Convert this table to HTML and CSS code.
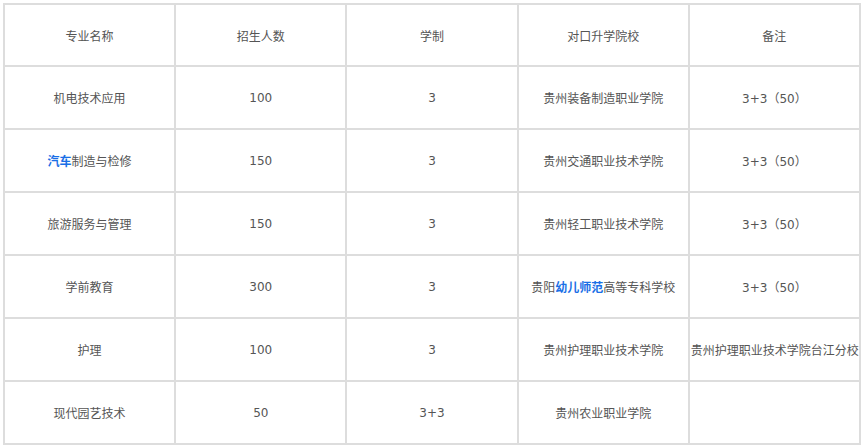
FILE: index.html
```html
<!DOCTYPE html>
<html lang="zh-CN">
<head>
<meta charset="utf-8">
<title>对口升学</title>
<link rel="stylesheet" href="styles.css">
</head>
<body>
<div class="wrap">
<table class="grid">
  <tbody>
    <tr class="head"><td>专业名称</td><td>招生人数</td><td>学制</td><td>对口升学院校</td><td>备注</td></tr>
    <tr><td>机电技术应用</td><td>100</td><td>3</td><td>贵州装备制造职业学院</td><td>3+3（50）</td></tr>
    <tr><td><span class="hl">汽车</span>制造与检修</td><td>150</td><td>3</td><td>贵州交通职业技术学院</td><td>3+3（50）</td></tr>
    <tr><td>旅游服务与管理</td><td>150</td><td>3</td><td>贵州轻工职业技术学院</td><td>3+3（50）</td></tr>
    <tr><td>学前教育</td><td>300</td><td>3</td><td>贵阳<span class="hl">幼儿师范</span>高等专科学校</td><td>3+3（50）</td></tr>
    <tr><td>护理</td><td>100</td><td>3</td><td>贵州护理职业技术学院</td><td>贵州护理职业技术学院台江分校</td></tr>
    <tr><td>现代园艺技术</td><td>50</td><td>3+3</td><td>贵州农业职业学院</td><td></td></tr>
  </tbody>
</table>
</div>
</body>
</html>
```

FILE: styles.css
```css
html, body {
  margin: 0;
  padding: 0;
  background: #ffffff;
}
.wrap {
  padding: 3px 0 0 3px;
}
.grid {
  width: 858px;
  table-layout: fixed;
  border-collapse: separate;
  border-spacing: 0;
  border-top: 2px solid #dddddd;
  border-left: 2px solid #dddddd;
  font-family: "DejaVu Sans", "Noto Sans CJK SC", sans-serif;
  font-size: 12px;
  color: #555555;
}
.grid td {
  border-right: 2px solid #dddddd;
  border-bottom: 2px solid #dddddd;
  height: 63px;
  padding: 0 1px;
  text-align: center;
  vertical-align: middle;
  white-space: nowrap;
  box-sizing: border-box;
}
.grid .head td {
  height: 62px;
}
.hl {
  color: #1a6fe6;
  font-weight: bold;
}
```
